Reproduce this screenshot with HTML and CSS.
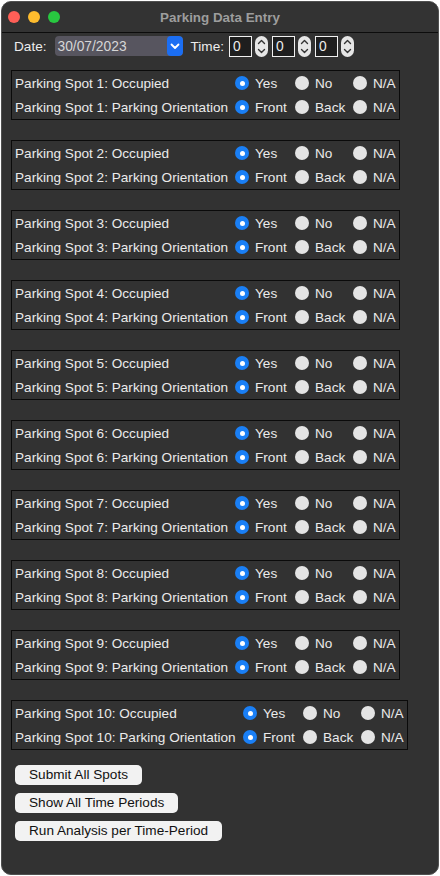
FILE: index.html
```html
<!DOCTYPE html>
<html lang="en">
<head>
<meta charset="utf-8">
<title>Parking Data Entry</title>
<link rel="stylesheet" href="styles.css">
</head>
<body>
<div class="window">
  <div class="titlebar">
    <div class="lights">
      <span class="light red"></span>
      <span class="light yellow"></span>
      <span class="light green"></span>
    </div>
    <div class="title">Parking Data Entry</div>
  </div>
  <div class="content">
    <div class="daterow">
      <span class="lbl">Date:</span>
      <div class="datefield">
        <span class="datetext">30/07/2023</span>
        <span class="datebtn"><svg width="16" height="20" viewBox="0 0 16 20"><path d="M4.5 8.5 L8 12 L11.5 8.5" fill="none" stroke="#fff" stroke-width="1.8" stroke-linecap="round" stroke-linejoin="round"/></svg></span>
      </div>
      <span class="lbl timelbl">Time:</span>
      <div class="spin"><span class="spinbox">0</span><svg class="stepper" width="13" height="21" viewBox="0 0 13 21"><rect x="0" y="0" width="13" height="21" rx="6.5" fill="#e6e6e6"/><path d="M3.5 7.5 L6.5 4.5 L9.5 7.5" fill="none" stroke="#333" stroke-width="1.4" stroke-linecap="round" stroke-linejoin="round"/><path d="M3.5 13.5 L6.5 16.5 L9.5 13.5" fill="none" stroke="#333" stroke-width="1.4" stroke-linecap="round" stroke-linejoin="round"/></svg></div>
      <div class="spin"><span class="spinbox">0</span><svg class="stepper" width="13" height="21" viewBox="0 0 13 21"><rect x="0" y="0" width="13" height="21" rx="6.5" fill="#e6e6e6"/><path d="M3.5 7.5 L6.5 4.5 L9.5 7.5" fill="none" stroke="#333" stroke-width="1.4" stroke-linecap="round" stroke-linejoin="round"/><path d="M3.5 13.5 L6.5 16.5 L9.5 13.5" fill="none" stroke="#333" stroke-width="1.4" stroke-linecap="round" stroke-linejoin="round"/></svg></div>
      <div class="spin"><span class="spinbox">0</span><svg class="stepper" width="13" height="21" viewBox="0 0 13 21"><rect x="0" y="0" width="13" height="21" rx="6.5" fill="#e6e6e6"/><path d="M3.5 7.5 L6.5 4.5 L9.5 7.5" fill="none" stroke="#333" stroke-width="1.4" stroke-linecap="round" stroke-linejoin="round"/><path d="M3.5 13.5 L6.5 16.5 L9.5 13.5" fill="none" stroke="#333" stroke-width="1.4" stroke-linecap="round" stroke-linejoin="round"/></svg></div>
    </div>

    <div class="groups">
      <div class="group">
        <span class="label">Parking Spot 1: Occupied</span>
        <span class="opt"><i class="radio on"></i>Yes</span><span class="opt"><i class="radio"></i>No</span><span class="opt"><i class="radio"></i>N/A</span>
        <span class="label">Parking Spot 1: Parking Orientation</span>
        <span class="opt"><i class="radio on"></i>Front</span><span class="opt"><i class="radio"></i>Back</span><span class="opt"><i class="radio"></i>N/A</span>
      </div>
      <div class="group">
        <span class="label">Parking Spot 2: Occupied</span>
        <span class="opt"><i class="radio on"></i>Yes</span><span class="opt"><i class="radio"></i>No</span><span class="opt"><i class="radio"></i>N/A</span>
        <span class="label">Parking Spot 2: Parking Orientation</span>
        <span class="opt"><i class="radio on"></i>Front</span><span class="opt"><i class="radio"></i>Back</span><span class="opt"><i class="radio"></i>N/A</span>
      </div>
      <div class="group">
        <span class="label">Parking Spot 3: Occupied</span>
        <span class="opt"><i class="radio on"></i>Yes</span><span class="opt"><i class="radio"></i>No</span><span class="opt"><i class="radio"></i>N/A</span>
        <span class="label">Parking Spot 3: Parking Orientation</span>
        <span class="opt"><i class="radio on"></i>Front</span><span class="opt"><i class="radio"></i>Back</span><span class="opt"><i class="radio"></i>N/A</span>
      </div>
      <div class="group">
        <span class="label">Parking Spot 4: Occupied</span>
        <span class="opt"><i class="radio on"></i>Yes</span><span class="opt"><i class="radio"></i>No</span><span class="opt"><i class="radio"></i>N/A</span>
        <span class="label">Parking Spot 4: Parking Orientation</span>
        <span class="opt"><i class="radio on"></i>Front</span><span class="opt"><i class="radio"></i>Back</span><span class="opt"><i class="radio"></i>N/A</span>
      </div>
      <div class="group">
        <span class="label">Parking Spot 5: Occupied</span>
        <span class="opt"><i class="radio on"></i>Yes</span><span class="opt"><i class="radio"></i>No</span><span class="opt"><i class="radio"></i>N/A</span>
        <span class="label">Parking Spot 5: Parking Orientation</span>
        <span class="opt"><i class="radio on"></i>Front</span><span class="opt"><i class="radio"></i>Back</span><span class="opt"><i class="radio"></i>N/A</span>
      </div>
      <div class="group">
        <span class="label">Parking Spot 6: Occupied</span>
        <span class="opt"><i class="radio on"></i>Yes</span><span class="opt"><i class="radio"></i>No</span><span class="opt"><i class="radio"></i>N/A</span>
        <span class="label">Parking Spot 6: Parking Orientation</span>
        <span class="opt"><i class="radio on"></i>Front</span><span class="opt"><i class="radio"></i>Back</span><span class="opt"><i class="radio"></i>N/A</span>
      </div>
      <div class="group">
        <span class="label">Parking Spot 7: Occupied</span>
        <span class="opt"><i class="radio on"></i>Yes</span><span class="opt"><i class="radio"></i>No</span><span class="opt"><i class="radio"></i>N/A</span>
        <span class="label">Parking Spot 7: Parking Orientation</span>
        <span class="opt"><i class="radio on"></i>Front</span><span class="opt"><i class="radio"></i>Back</span><span class="opt"><i class="radio"></i>N/A</span>
      </div>
      <div class="group">
        <span class="label">Parking Spot 8: Occupied</span>
        <span class="opt"><i class="radio on"></i>Yes</span><span class="opt"><i class="radio"></i>No</span><span class="opt"><i class="radio"></i>N/A</span>
        <span class="label">Parking Spot 8: Parking Orientation</span>
        <span class="opt"><i class="radio on"></i>Front</span><span class="opt"><i class="radio"></i>Back</span><span class="opt"><i class="radio"></i>N/A</span>
      </div>
      <div class="group">
        <span class="label">Parking Spot 9: Occupied</span>
        <span class="opt"><i class="radio on"></i>Yes</span><span class="opt"><i class="radio"></i>No</span><span class="opt"><i class="radio"></i>N/A</span>
        <span class="label">Parking Spot 9: Parking Orientation</span>
        <span class="opt"><i class="radio on"></i>Front</span><span class="opt"><i class="radio"></i>Back</span><span class="opt"><i class="radio"></i>N/A</span>
      </div>
      <div class="group wide">
        <span class="label">Parking Spot 10: Occupied</span>
        <span class="opt"><i class="radio on"></i>Yes</span><span class="opt"><i class="radio"></i>No</span><span class="opt"><i class="radio"></i>N/A</span>
        <span class="label">Parking Spot 10: Parking Orientation</span>
        <span class="opt"><i class="radio on"></i>Front</span><span class="opt"><i class="radio"></i>Back</span><span class="opt"><i class="radio"></i>N/A</span>
      </div>
    </div>

    <div class="buttons">
      <button class="btn">Submit All Spots</button>
      <button class="btn">Show All Time Periods</button>
      <button class="btn">Run Analysis per Time-Period</button>
    </div>
  </div>
</div>
</body>
</html>
```
FILE: styles.css
```css
* { box-sizing: border-box; }
html, body { margin: 0; padding: 0; background: #ffffff; }
body {
  font-family: "Liberation Sans", Arial, sans-serif;
  font-size: 13.6px;
  color: #ebebeb;
}
.window {
  margin: 1px;
  width: 438px;
  height: 874px;
  background: #323232;
  border-radius: 10px;
  border: 1px solid #505050;
  overflow: hidden;
}
.titlebar {
  height: 31px;
  border-bottom: 1px solid #0c0c0c;
  display: flex;
  align-items: center;
  justify-content: center;
  position: relative;
  background: #333333;
}
.lights {
  position: absolute;
  left: 6px;
  top: 9px;
  display: flex;
  gap: 8px;
}
.light { width: 12px; height: 12px; border-radius: 50%; display: block; }
.red { background: #fe5f57; }
.yellow { background: #febc2e; }
.green { background: #28c840; }
.title {
  font-weight: bold;
  color: #9d9d9d;
  font-size: 13.4px;
}
.content {
  padding: 2px 0 0 9px;
  display: flex;
  flex-direction: column;
  align-items: flex-start;
}
.daterow {
  display: flex;
  align-items: center;
  height: 22px;
  margin-left: 3px;
}
.lbl { color: #ececec; }
.datefield {
  margin-left: 8px;
  width: 128px;
  height: 20px;
  background: #57555f;
  border-radius: 4px;
  display: flex;
  align-items: center;
  justify-content: space-between;
  overflow: hidden;
}
.datetext { padding-left: 3px; color: #d6d6d6; font-size: 13.8px; }
.datebtn {
  width: 16px;
  height: 20px;
  background: #1b6ef3;
  border-radius: 4px;
  display: flex;
}
.timelbl { margin-left: 8px; margin-right: 5px; }
.spin { display: flex; align-items: center; gap: 3px; margin-right: 4px; }
.spinbox {
  width: 23px;
  height: 21px;
  border: 1px solid #f0f0f0;
  background: #1e1e1e;
  color: #ececec;
  padding-left: 3px;
  line-height: 19px;
  font-size: 13.8px;
}
.stepper { display: block; }
.groups {
  margin-top: 13px;
  display: flex;
  flex-direction: column;
  align-items: flex-start;
  gap: 20px;
}
.group {
  display: grid;
  grid-template-columns: 220px 60px 58px 46px;
  grid-auto-rows: 24px;
  border: 1px solid #0a0a0a;
  padding-left: 3px;
  align-items: center;
}
.group.wide { grid-template-columns: 228px 60px 58px 46px; }
.label { color: #ebebeb; white-space: nowrap; }
.opt { display: flex; align-items: center; gap: 6px; color: #ebebeb; white-space: nowrap; }
.radio {
  width: 14px;
  height: 14px;
  border-radius: 50%;
  background: #e4e4e4;
  display: block;
  flex: none;
  position: relative;
}
.radio.on { background: #1a7ff5; }
.radio.on::after {
  content: "";
  position: absolute;
  left: 4.5px;
  top: 4.5px;
  width: 5px;
  height: 5px;
  border-radius: 50%;
  background: #ffffff;
}
.buttons {
  margin-top: 15px;
  margin-left: 4px;
  display: flex;
  flex-direction: column;
  align-items: flex-start;
  gap: 8px;
}
.btn {
  font-family: "Liberation Sans", Arial, sans-serif;
  font-size: 13.6px;
  height: 20px;
  border: none;
  border-radius: 5px;
  background: #f2f2f2;
  color: #111;
  padding: 0 14px;
  line-height: 20px;
}
```
